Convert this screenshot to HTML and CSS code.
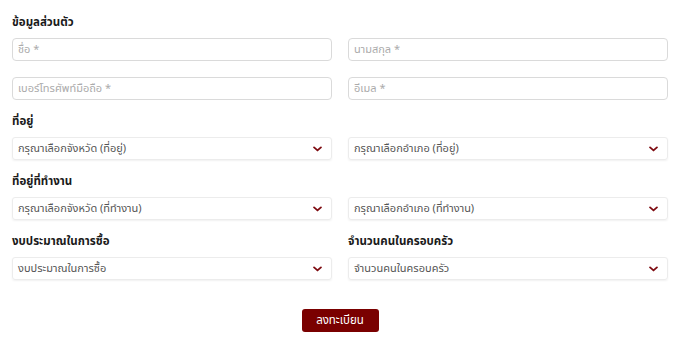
FILE: index.html
```html
<!DOCTYPE html>
<html lang="th">
<head>
<meta charset="utf-8">
<link rel="stylesheet" href="styles.css">
</head>
<body>
<form class="form">
  <section class="section">
    <h3 class="heading">ข้อมูลส่วนตัว</h3>
    <div class="grid">
      <div class="input">ชื่อ *</div>
      <div class="input">นามสกุล *</div>
      <div class="input">เบอร์โทรศัพท์มือถือ *</div>
      <div class="input">อีเมล *</div>
    </div>
  </section>
  <section class="section">
    <h3 class="heading">ที่อยู่</h3>
    <div class="grid">
      <div class="select"><span>กรุณาเลือกจังหวัด (ที่อยู่)</span><svg class="chev" viewBox="0 0 10 6"><path d="M1.2 1.2 L5 4.6 L8.8 1.2"/></svg></div>
      <div class="select"><span>กรุณาเลือกอำเภอ (ที่อยู่)</span><svg class="chev" viewBox="0 0 10 6"><path d="M1.2 1.2 L5 4.6 L8.8 1.2"/></svg></div>
    </div>
  </section>
  <section class="section">
    <h3 class="heading">ที่อยู่ที่ทำงาน</h3>
    <div class="grid">
      <div class="select"><span>กรุณาเลือกจังหวัด (ที่ทำงาน)</span><svg class="chev" viewBox="0 0 10 6"><path d="M1.2 1.2 L5 4.6 L8.8 1.2"/></svg></div>
      <div class="select"><span>กรุณาเลือกอำเภอ (ที่ทำงาน)</span><svg class="chev" viewBox="0 0 10 6"><path d="M1.2 1.2 L5 4.6 L8.8 1.2"/></svg></div>
    </div>
  </section>
  <section class="section">
    <div class="grid">
      <div class="field">
        <h3 class="heading">งบประมาณในการซื้อ</h3>
        <div class="select"><span>งบประมาณในการซื้อ</span><svg class="chev" viewBox="0 0 10 6"><path d="M1.2 1.2 L5 4.6 L8.8 1.2"/></svg></div>
      </div>
      <div class="field">
        <h3 class="heading">จำนวนคนในครอบครัว</h3>
        <div class="select"><span>จำนวนคนในครอบครัว</span><svg class="chev" viewBox="0 0 10 6"><path d="M1.2 1.2 L5 4.6 L8.8 1.2"/></svg></div>
      </div>
    </div>
  </section>
  <div class="actions">
    <button type="button" class="btn">ลงทะเบียน</button>
  </div>
</form>
</body>
</html>
```
FILE: styles.css
```css
* { box-sizing: border-box; }
html, body { margin: 0; padding: 0; background: #fff; }
body {
  font-family: "Noto Sans Thai", "Noto Sans", "DejaVu Sans", sans-serif;
  color: #222;
}
.form {
  padding: 13px 12px 0 12px;
  display: flex;
  flex-direction: column;
}
.section { margin-bottom: 12px; }
.heading {
  margin: 0 0 7px 0;
  padding-top: 2px;
  font-size: 11.5px;
  line-height: 16px;
  font-weight: 700;
  color: #1a1a1a;
}
.grid {
  display: grid;
  grid-template-columns: 1fr 1fr;
  column-gap: 16px;
  row-gap: 16px;
}
.field { display: flex; flex-direction: column; }
.input {
  height: 23px;
  border: 1.5px solid #dadada;
  border-radius: 4px;
  padding: 0 5px;
  display: flex;
  align-items: center;
  font-size: 11px;
  color: #ababab;
}
.select {
  height: 23px;
  border: 1px solid #ececec;
  border-radius: 3px;
  box-shadow: 0 1px 2px rgba(0,0,0,0.06);
  padding: 0 9px 0 5px;
  display: flex;
  align-items: center;
  justify-content: space-between;
  font-size: 11px;
  color: #555;
}
.chev {
  width: 9px;
  height: 6px;
  fill: none;
  stroke: #7d0a10;
  stroke-width: 2;
  stroke-linecap: round;
  stroke-linejoin: round;
}
.actions {
  display: flex;
  justify-content: center;
  padding-top: 17px;
}
.btn {
  width: 77px;
  height: 23px;
  border: none;
  border-radius: 3px;
  background: #7a0000;
  color: #fff;
  font-family: inherit;
  font-size: 11.5px;
  padding: 0;
}
```
